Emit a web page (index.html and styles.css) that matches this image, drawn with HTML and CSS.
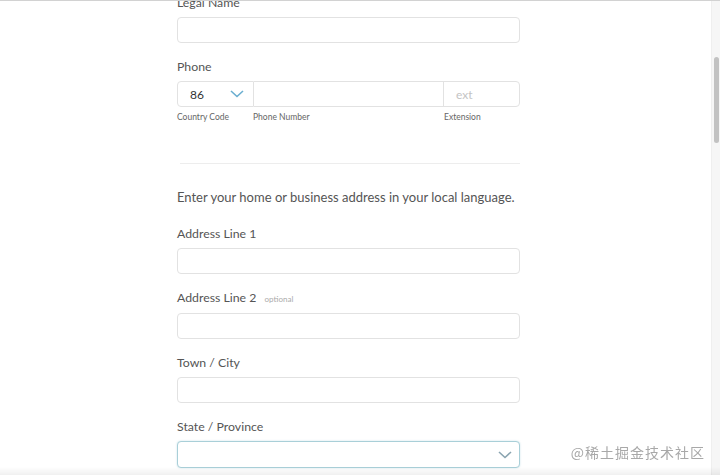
FILE: index.html
```html
<!DOCTYPE html>
<html>
<head>
<meta charset="utf-8">
<link rel="stylesheet" href="styles.css">
</head>
<body>
<div class="frame">
  <form class="form">
    <div class="field first">
      <label class="label">Legal Name</label>
      <div class="input"></div>
    </div>
    <div class="field">
      <label class="label">Phone</label>
      <div class="phone">
        <div class="seg cc"><span>86</span>
          <svg class="chev blue" width="14" height="8" viewBox="0 0 14 8"><path d="M1 1l6 5.5L13 1" fill="none" stroke="currentColor" stroke-width="1.6"/></svg>
        </div>
        <div class="seg num"></div>
        <div class="seg ext"><span>ext</span></div>
      </div>
      <div class="sublabels">
        <span class="s-cc">Country Code</span>
        <span class="s-num">Phone Number</span>
        <span class="s-ext">Extension</span>
      </div>
    </div>
    <hr class="divider">
    <p class="intro">Enter your home or business address in your local language.</p>
    <div class="field">
      <label class="label">Address Line 1</label>
      <div class="input"></div>
    </div>
    <div class="field">
      <label class="label">Address Line 2 <span class="opt">optional</span></label>
      <div class="input"></div>
    </div>
    <div class="field">
      <label class="label">Town / City</label>
      <div class="input"></div>
    </div>
    <div class="field">
      <label class="label">State / Province</label>
      <div class="input select">
        <svg class="chev grey" width="14" height="8" viewBox="0 0 14 8"><path d="M1 1l6 5.5L13 1" fill="none" stroke="currentColor" stroke-width="1.6"/></svg>
      </div>
    </div>
  </form>
</div>
<div class="scrollbar"><div class="thumb"></div></div>
<div class="shade"></div>
<div class="watermark">@稀土掘金技术社区</div>
</body>
</html>
```
FILE: styles.css
```css
html, body {
  margin: 0;
  padding: 0;
  background: #fff;
  height: 475px;
  overflow: hidden;
}
body {
  font-family: Lato, "Open Sans", sans-serif;
  color: #555;
  border-top: 1px solid #d2d2d2;
  box-sizing: border-box;
}
.frame {
  padding-left: 177px;
}
.form {
  width: 343px;
  display: flex;
  flex-direction: column;
}
.field {
  display: flex;
  flex-direction: column;
}
.label {
  font-size: 12.3px;
  line-height: 16px;
  color: #555;
  margin: 16px 0 6px;
}
.field.first .label {
  margin-top: -6px;
}
.input {
  height: 26px;
  border: 1px solid #e2e2e2;
  border-radius: 4px;
  box-sizing: border-box;
  background: #fff;
}
.opt {
  font-size: 8px;
  color: #aaa;
  margin-left: 5px;
}
.phone {
  display: flex;
  height: 26px;
}
.seg {
  border: 1px solid #e2e2e2;
  box-sizing: border-box;
  height: 26px;
  display: flex;
  align-items: center;
  font-size: 12px;
}
.cc {
  width: 77px;
  border-radius: 4px 0 0 4px;
  padding: 0 9px 0 12px;
  justify-content: space-between;
  color: #333;
}
.num {
  flex: 1;
  border-left: none;
}
.ext {
  width: 77px;
  border-left: 1px solid #e2e2e2;
  border-radius: 0 4px 4px 0;
  margin-left: -1px;
  padding-left: 12px;
  color: #c4c4c4;
}
.chev.blue { color: #6aaed0; }
.chev.grey { color: #8aa4b0; }
.sublabels {
  display: flex;
  height: 12px;
  margin-top: 5px;
  font-size: 8.5px;
  color: #666;
}
.s-cc { width: 76px; }
.s-num { flex: 1; }
.s-ext { width: 76px; }
.divider {
  border: none;
  border-top: 1px solid #ededed;
  margin: 39px 0 0 3px;
  width: 340px;
}
.intro {
  font-size: 13px;
  line-height: 18px;
  margin: 24px 0 0;
  color: #555;
}
.intro + .field .label { margin-top: 20px; }
.select {
  border-color: #a9cfd8;
  box-shadow: 0 0 2px rgba(120,180,200,0.4);
  display: flex;
  align-items: center;
  justify-content: flex-end;
  padding-right: 7px;
  height: 27px;
}
.scrollbar {
  position: fixed;
  top: 1px;
  right: 0;
  width: 8px;
  height: 474px;
  background: #f6f6f6;
  border-left: 1px solid #efefef;
}
.thumb {
  margin: 56px 0 0 2px;
  width: 5px;
  height: 86px;
  border-radius: 3px;
  background: #c2c2c2;
}
.shade {
  position: fixed;
  left: 0;
  right: 0;
  bottom: 0;
  height: 8px;
  background: linear-gradient(to bottom, rgba(0,0,0,0), rgba(0,0,0,0.06));
}
.watermark {
  position: fixed;
  right: 15px;
  bottom: 13px;
  font-family: "Noto Sans CJK SC", sans-serif;
  font-size: 14px;
  letter-spacing: 1px;
  color: #a8a8a8;
}
```
